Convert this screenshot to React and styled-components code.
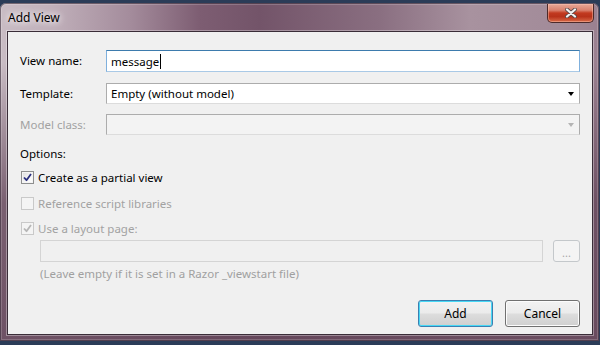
import React from 'react';
import styled, { createGlobalStyle, css } from 'styled-components';

const Global = createGlobalStyle`
  html, body { margin: 0; padding: 0; background: #2b3c58; }
  body {
    width: 600px; height: 345px; overflow: hidden;
    font-family: "Noto Sans", "DejaVu Sans", sans-serif;
    font-size: 11.5px; color: #000;
  }
`;

const Window = styled.div`
  margin-top: 3px;
  width: 599px;
  height: 338px;
  box-sizing: border-box;
  padding: 0 6px 6px 7px;
  display: flex;
  flex-direction: column;
  border-radius: 6px 6px 0 0;
  box-shadow: inset 0 0 0 1px rgba(40, 25, 40, 0.55), inset 0 0 0 2px rgba(255, 255, 255, 0.18);
  background:
    linear-gradient(to bottom, rgba(0,0,0,0) 0px, rgba(0,0,0,0) 60px, rgba(95, 65, 85, 0.75) 200px, rgba(100, 70, 90, 0.9) 338px),
    linear-gradient(to right, #c9bcc4 0px, #c1b1bb 50px, #a48c9c 130px, #7d5d72 200px, #735469 260px, #8a6f81 380px, #a8929f 470px, #a28b99 560px, #9a8090 599px);
`;

const TitleBar = styled.div`
  height: 28px;
  display: flex;
  align-items: flex-start;
  justify-content: space-between;
`;

const Title = styled.span`
  margin: 7px 0 0 1px;
  line-height: 16px;
  font-size: 12px;
  color: #000;
  text-shadow: 0 0 6px #fff, 0 0 10px rgba(255,255,255,0.8);
`;

const CloseButton = styled.div`
  margin: 1px -1px 0 0;
  width: 47px;
  height: 19px;
  box-sizing: border-box;
  border: 1px solid #4d2a2a;
  border-top: none;
  border-radius: 0 0 5px 5px;
  display: flex;
  align-items: center;
  justify-content: center;
  background: linear-gradient(to bottom, #e7a898 0%, #d9806c 35%, #c23a20 50%, #b8321a 70%, #d86a48 100%);
  box-shadow: inset 0 0 0 1px rgba(255, 200, 180, 0.45);
`;

const Client = styled.div`
  flex: 1;
  box-sizing: border-box;
  border: 1px solid #3a2d38;
  box-shadow: 0 0 0 1px rgba(255,255,255,0.35);
  background: #f0f0f0;
  padding: 18px 12px 7px 12px;
  display: flex;
  flex-direction: column;
`;

const FieldRow = styled.div`
  display: grid;
  grid-template-columns: 86px 1fr;
  align-items: center;
  height: ${p => p.$h}px;
  margin-top: ${p => p.$mt || 0}px;
`;

const Label = styled.span`
  line-height: 16px;
  color: ${p => (p.$disabled ? '#a2a2a2' : '#000')};
`;

const TextBox = styled.div`
  height: 100%;
  box-sizing: border-box;
  background: #fff;
  border: 1px solid #a9c9e6;
  border-top-color: #3d7bad;
  border-left-color: #7fb0dd;
  border-right-color: #7fb0dd;
  padding-left: 4px;
  display: flex;
  align-items: center;
`;

const Caret = styled.span`
  display: inline-block;
  width: 1px;
  height: 15px;
  background: #000;
  margin-left: 1px;
`;

const Combo = styled.div`
  height: 100%;
  box-sizing: border-box;
  border: 1px solid #acacac;
  border-bottom-color: #dcdcdc;
  background: ${p => (p.$disabled ? '#f3f3f3' : '#fff')};
  display: flex;
  align-items: center;
  justify-content: space-between;
  padding: 0 5px 0 4px;
`;

const Arrow = styled.span`
  width: 0;
  height: 0;
  border-left: 3.5px solid transparent;
  border-right: 3.5px solid transparent;
  border-top: 4px solid ${p => (p.$disabled ? '#b4b4b4' : '#000')};
`;

const SectionLabel = styled.div`
  line-height: 16px;
  margin-top: ${p => p.$mt}px;
`;

const CheckRow = styled.div`
  display: flex;
  align-items: center;
  gap: 4px;
  height: 16px;
  margin-top: ${p => p.$mt}px;
  padding-left: 1px;
  color: ${p => (p.$disabled ? '#a2a2a2' : '#000')};
`;

const Box = styled.span`
  width: 13px;
  height: 13px;
  box-sizing: border-box;
  display: flex;
  align-items: center;
  justify-content: center;
  ${p => p.$disabled ? css`
    border: 1px solid #c9c9c9;
    background: #f4f4f4;
  ` : css`
    border: 1px solid #8e8f8f;
    background: linear-gradient(135deg, #dcdcdc 0%, #f6f6f6 60%, #ffffff 100%);
    box-shadow: inset 0 0 0 1px #f4f4f4;
  `}
`;

const PathRow = styled.div`
  display: grid;
  grid-template-columns: 1fr 27px;
  gap: 10px;
  height: 22px;
  margin: 4px 0 0 20px;
`;

const DisabledBox = styled.div`
  box-sizing: border-box;
  border: 1px solid #d4d4d4;
  background: #f0f0f0;
`;

const SmallButton = styled.div`
  box-sizing: border-box;
  border: 1px solid #c4c8cb;
  border-radius: 3px;
  background: #f4f4f4;
  color: #a8a8a8;
  display: flex;
  align-items: center;
  justify-content: center;
  font-size: 11px;
  line-height: 1;
  padding-top: 2px;
`;

const Hint = styled.div`
  margin: 4px 0 0 20px;
  line-height: 16px;
  color: #a0a0a0;
`;

const ButtonBar = styled.div`
  margin-top: auto;
  display: flex;
  justify-content: flex-end;
  gap: 12px;
`;

const Button = styled.div`
  width: 75px;
  height: 27px;
  box-sizing: border-box;
  border-radius: 3px;
  border: 1px solid ${p => (p.$default ? '#3c7fb1' : '#707070')};
  box-shadow: inset 0 0 0 1px ${p => (p.$default ? '#48d8f5' : '#fcfcfc')};
  background: linear-gradient(to bottom, #f2f2f2 0%, #ebebeb 48%, #dddddd 52%, #cfcfcf 100%);
  display: flex;
  align-items: center;
  justify-content: center;
  line-height: 16px;
  font-size: 12px;
`;

function Check({ color }) {
  return (
    <svg width="9" height="9" viewBox="0 0 9 9">
      <path d="M1 4.5 L3.5 7.2 L8 1" fill="none" stroke={color} strokeWidth="1.8" strokeLinejoin="round" />
    </svg>
  );
}

export default function App() {
  return (
    <>
      <Global />
      <Window>
        <TitleBar>
          <Title>Add View</Title>
          <CloseButton>
            <svg width="14" height="10" viewBox="0 0 14 10">
              <path d="M3 1.5 L11 8.5 M11 1.5 L3 8.5" stroke="#5a4a4a" strokeWidth="3.8" strokeLinecap="round" />
              <path d="M3 1.5 L11 8.5 M11 1.5 L3 8.5" stroke="#f4f4f4" strokeWidth="2.2" strokeLinecap="round" />
            </svg>
          </CloseButton>
        </TitleBar>
        <Client>
          <FieldRow $h={22}>
            <Label>View name:</Label>
            <TextBox>message<Caret /></TextBox>
          </FieldRow>
          <FieldRow $h={21} $mt={11}>
            <Label>Template:</Label>
            <Combo>
              <span>Empty (without model)</span>
              <Arrow />
            </Combo>
          </FieldRow>
          <FieldRow $h={21} $mt={10}>
            <Label $disabled>Model class:</Label>
            <Combo $disabled>
              <span />
              <Arrow $disabled />
            </Combo>
          </FieldRow>
          <SectionLabel $mt={11}>Options:</SectionLabel>
          <CheckRow $mt={7}>
            <Box><Check color="#2a2f7e" /></Box>
            <span>Create as a partial view</span>
          </CheckRow>
          <CheckRow $mt={10} $disabled>
            <Box $disabled />
            <span>Reference script libraries</span>
          </CheckRow>
          <CheckRow $mt={9} $disabled>
            <Box $disabled><Check color="#b6b6b6" /></Box>
            <span>Use a layout page:</span>
          </CheckRow>
          <PathRow>
            <DisabledBox />
            <SmallButton>...</SmallButton>
          </PathRow>
          <Hint>(Leave empty if it is set in a Razor _viewstart file)</Hint>
          <ButtonBar>
            <Button $default>Add</Button>
            <Button>Cancel</Button>
          </ButtonBar>
        </Client>
      </Window>
    </>
  );
}
